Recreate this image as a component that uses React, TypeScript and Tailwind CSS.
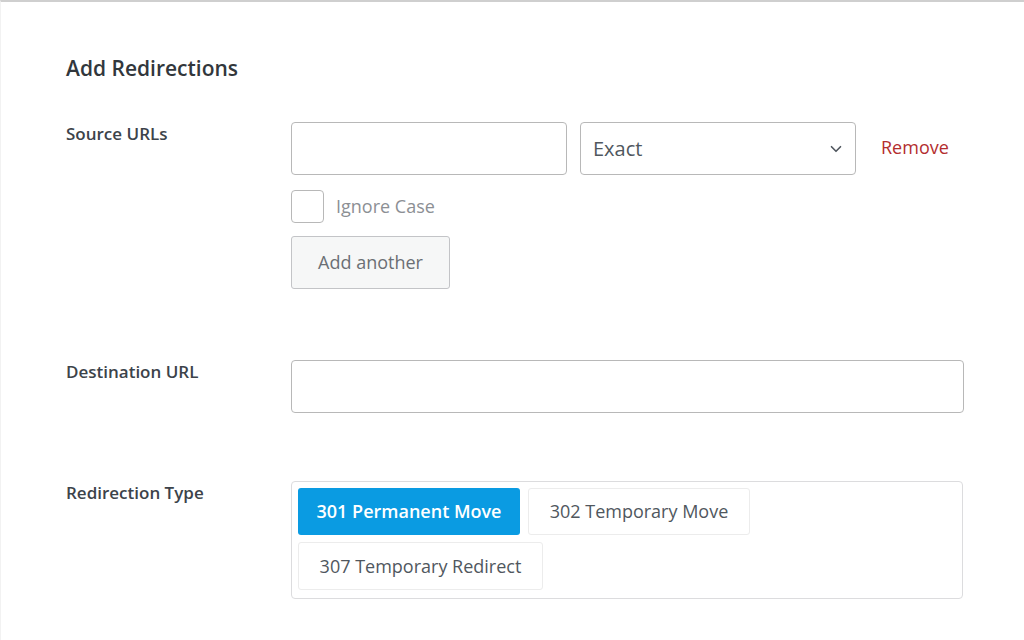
import { ChevronDown } from "lucide-react";

const font = { fontFamily: '"Open Sans", "Noto Sans", sans-serif' };

function Label({ children }: { children: string }) {
  return <div className="w-[225px] shrink-0 text-[17px] font-semibold leading-[24px] text-[#3c434a]">{children}</div>;
}

export default function App() {
  return (
    <div className="h-[640px] w-[1024px] overflow-hidden border-t-2 border-l border-t-[#cfcfcf] border-l-[#f2f2f2] bg-white" style={font}>
      <div className="pl-[65px] pt-[52px]">
        <h2 className="text-[21px] font-semibold leading-[28px] text-[#32373c]">Add Redirections</h2>

        <div className="mt-[40px] flex">
          <Label>Source URLs</Label>
          <div className="flex flex-col">
            <div className="flex items-center">
              <input className="h-[53px] w-[276px] rounded-[4px] border border-[#b8b8b8] bg-white px-3 outline-none" />
              <div className="ml-[13px] flex h-[53px] w-[276px] items-center justify-between rounded-[4px] border border-[#b8b8b8] bg-white pl-[12px] pr-[10px]">
                <span className="text-[20px] text-[#50575e]">Exact</span>
                <ChevronDown size={18} strokeWidth={2.2} className="text-[#50575e]" />
              </div>
              <span className="ml-[25px] -mt-[2px] text-[18px] text-[#b32d2e]">Remove</span>
            </div>
            <div className="mt-[15px] flex items-center">
              <span className="h-[33px] w-[33px] rounded-[4px] border border-[#b8b8b8] bg-white" />
              <span className="ml-[12px] text-[18px] text-[#8c8f94]">Ignore Case</span>
            </div>
            <button className="mt-[13px] h-[53px] w-[159px] rounded-[3px] border border-[#c3c4c7] bg-[#f6f7f7] text-[18px] text-[#6b6f74]">
              Add another
            </button>
          </div>
        </div>

        <div className="mt-[71px] flex">
          <Label>Destination URL</Label>
          <input className="h-[53px] w-[673px] rounded-[4px] border border-[#b8b8b8] bg-white px-3 outline-none" />
        </div>

        <div className="mt-[68px] flex">
          <Label>Redirection Type</Label>
          <div className="flex h-[118px] w-[672px] flex-wrap content-start gap-x-[8px] gap-y-[7px] rounded-[4px] border border-[#dcdcde] bg-white p-[6px]">
            <button className="h-[47px] w-[222px] rounded-[3px] bg-[#0a9be2] text-[18px] font-semibold text-white">301 Permanent Move</button>
            <button className="h-[47px] w-[222px] rounded-[3px] border border-[#ececec] bg-white text-[18px] text-[#50575e]">302 Temporary Move</button>
            <button className="h-[48px] w-[245px] rounded-[3px] border border-[#ececec] bg-white text-[18px] text-[#50575e]">307 Temporary Redirect</button>
          </div>
        </div>
      </div>
    </div>
  );
}
